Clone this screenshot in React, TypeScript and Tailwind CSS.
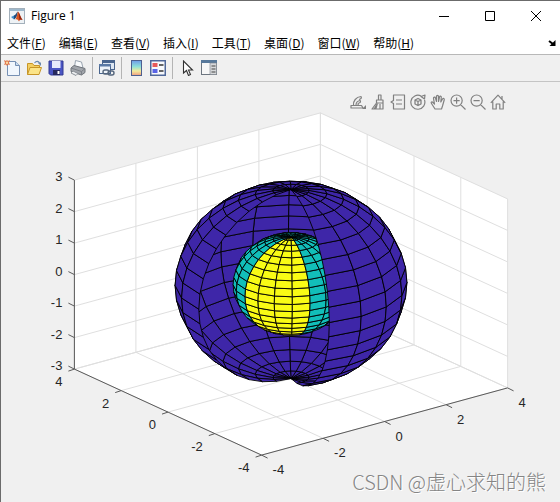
import React from 'react';
import { clsx } from 'clsx';

const menus = [
  { name: '文件', key: 'F' },
  { name: '编辑', key: 'E' },
  { name: '查看', key: 'V' },
  { name: '插入', key: 'I' },
  { name: '工具', key: 'T' },
  { name: '桌面', key: 'D' },
  { name: '窗口', key: 'W' },
  { name: '帮助', key: 'H' },
];

// Axes: x and y run from -4 to 4, z from -3 to 3
const OX = 291;
const OY = 202;
const AZIMUTHS = 20;
const LATITUDES = 20;

type Vec3 = [number, number, number];

function project([x, y, z]: Vec3): [number, number] {
  return [OX + 30.75 * x - 23.4 * y, OY - 8.4 * x - 10.75 * y - 31.5 * z];
}

function spherePoint(r: number, i: number, j: number): Vec3 {
  const az = -Math.PI + (i * 2 * Math.PI) / AZIMUTHS;
  const lat = -Math.PI / 2 + (j * Math.PI) / LATITUDES;
  return [r * Math.cos(lat) * Math.cos(az), r * Math.cos(lat) * Math.sin(az), r * Math.sin(lat)];
}

// Positive when the face normal points to the camera
function facing([x, y, z]: Vec3) {
  const az = (-127.3 * Math.PI) / 180;
  return 31.5 * (x * Math.cos(az) + y * Math.sin(az)) + 13.6 * z;
}

const toPoints = (pts: Vec3[]) =>
  pts.map((p) => project(p).map((n) => n.toFixed(1)).join(',')).join(' ');

type Face = { points: string; cut: boolean; front: boolean };

function buildSphere(r: number): Face[] {
  const faces: Face[] = [];
  for (let j = 0; j < LATITUDES; j++) {
    for (let i = 0; i < AZIMUTHS; i++) {
      faces.push({
        points: toPoints([
          spherePoint(r, i, j),
          spherePoint(r, i + 1, j),
          spherePoint(r, i + 1, j + 1),
          spherePoint(r, i, j + 1),
        ]),
        cut: i < 4,
        front: facing(spherePoint(r, i + 0.5, j + 0.5)) > 0,
      });
    }
  }
  return faces;
}

const shell = buildSphere(3).filter((f) => !f.cut);
const core = buildSphere(1.5).filter((f) => f.front);

const xyTicks = [-4, -2, 0, 2, 4];
const zTicks = [-3, -2, -1, 0, 1, 2, 3];

function Faces({ faces, fill }: { faces: Face[]; fill?: string }) {
  return (
    <g stroke="#000" strokeWidth="0.9" strokeLinejoin="round">
      {faces.map((f, i) => (
        <polygon key={i} points={f.points} fill={fill ?? (f.cut ? '#f9fb15' : '#12beb9')} />
      ))}
    </g>
  );
}

function Plot() {
  return (
    <svg viewBox="0 0 560 420" className="block w-full" role="img" aria-label="Figure 1">
      <polygon
        fill="#fff"
        points={toPoints([
          [-4, 4, -3],
          [-4, 4, 3],
          [4, 4, 3],
          [4, -4, 3],
          [4, -4, -3],
          [-4, -4, -3],
        ])}
      />

      {/* Grid */}
      <g fill="none" stroke="#dfdfdf" strokeWidth="1">
        {xyTicks.map((t) => (
          <React.Fragment key={t}>
            <polyline points={toPoints([[t, -4, -3], [t, 4, -3], [t, 4, 3]])} />
            <polyline points={toPoints([[-4, t, -3], [4, t, -3], [4, t, 3]])} />
          </React.Fragment>
        ))}
        {zTicks.map((t) => (
          <polyline key={t} points={toPoints([[-4, 4, t], [4, 4, t], [4, -4, t]])} />
        ))}
      </g>

      {/* Axis lines */}
      <g fill="none" stroke="#5a5a5a" strokeWidth="1">
        <polyline points={toPoints([[-4, 4, 3], [-4, 4, -3], [-4, -4, -3], [4, -4, -3]])} />
        {xyTicks.map((t) => {
          const [ax, ay] = project([t, -4, -3]);
          const [bx, by] = project([-4, t, -3]);
          return <path key={t} d={`M${ax} ${ay}l6 3M${bx} ${by}l-6 2`} />;
        })}
        {zTicks.map((t) => {
          const [x, y] = project([-4, 4, t]);
          return <path key={t} d={`M${x} ${y}l-6 -3`} />;
        })}
      </g>

      <g className="font-['Liberation_Sans',Arial,sans-serif] text-[13px]" fill="#262626">
        {xyTicks.map((t) => {
          const [ax, ay] = project([t, -4, -3]);
          const [bx, by] = project([-4, t, -3]);
          return (
            <React.Fragment key={t}>
              <text x={ax + 11} y={ay + 19}>{t}</text>
              <text x={bx - 12} y={by + 17} textAnchor="end">{t}</text>
            </React.Fragment>
          );
        })}
        {zTicks.map((t) => {
          const [x, y] = project([-4, 4, t]);
          return <text key={t} x={x - 12} y={y + 1} textAnchor="end">{t}</text>;
        })}
      </g>

      {/* Far side of the shell, the core, then the near side */}
      <Faces faces={shell.filter((f) => !f.front)} fill="#3e26a8" />
      <Faces faces={core} />
      <Faces faces={shell.filter((f) => f.front)} fill="#3e26a8" />
    </svg>
  );
}

const MatlabIcon = () => (
  <svg viewBox="0 0 16 16" className="size-4">
    <rect x=".5" y=".5" width="15" height="15" fill="#eef2f5" stroke="#a3b0bb" />
    <path d="M1 1h14v2H1z" fill="#9db8cc" />
    <path d="M2 9l3-1.500 2 2-2 2z" fill="#3c8cc8" />
    <path d="M5 7.500c2-.5 2.500-3.500 4-4L7.500 9 5 11.500z" fill="#234a78" />
    <path d="M9 3.500c1.500 1 2.500 6 5 8.500-2-1-3-.5-4 1.500-1-2-2-2.500-4-2 2-1 2-6 3-8z" fill="#d9541e" />
    <path d="M9.500 4c1.500 2 2 6 4 8-2-1-2.500-.5-3 0z" fill="#8e2415" />
  </svg>
);

const toolIcons: Record<string, React.ReactNode> = {
  new: (
    <>
      <path d="M3.500 1.500h8l4 4v10h-12z" fill="#f0f6fd" stroke="#7690b4" />
      <path d="M11.500 1.500v4h4" fill="#c8dcf0" stroke="#7690b4" />
      <path d="M0 0l2 1 1-1 1 1 2-1-1 2.500L6 5 4 4.500 3 6 2 4.500 0 5l1-2z" fill="#e0764a" />
      <circle cx="3" cy="2.800" r="1.200" fill="#fbd9a0" />
    </>
  ),
  open: (
    <>
      <path d="M1.500 14.500v-11h5l1.500 2h5.500v3" fill="#f3cf62" stroke="#c79527" />
      <path d="M1.500 14.500l2.500-7h11.500l-2.500 7z" fill="#fbe488" stroke="#c79527" />
      <path d="M8.500 3c2-2.500 4-2 5 0" fill="none" stroke="#6a89ae" strokeWidth="1.200" />
      <path d="M11.500 2.500H15V6z" fill="#6a89ae" />
    </>
  ),
  save: (
    <>
      <path d="M1 1h14v14H2.500L1 13.500z" fill="#4a55c4" stroke="#333b91" />
      <path d="M4 1h8.500v7H4z" fill="#e6eafc" />
      <path d="M5 10h7v5H5z" fill="#25285c" />
      <path d="M9.500 11h2v3h-2z" fill="#fff" />
    </>
  ),
  print: (
    <>
      <path d="M4.500 7l1-6.500 6 1.500 1.500 6z" fill="#f8fafc" stroke="#98a3af" />
      <path d="M1 8l3-2.500 11 3v4L11.500 15 1 11.500z" fill="#a2a6ac" stroke="#6f747b" />
      <path d="M1 8l10.500 3.500L15 8.500M11.500 11.500V15" fill="none" stroke="#7c8188" />
      <path d="M3 11l5 2.500-2 2-5-2.500z" fill="#eceef0" stroke="#8b9198" />
    </>
  ),
  link: (
    <>
      <rect x="3.500" y=".5" width="12" height="9" fill="#dce6f2" stroke="#49658e" />
      <path d="M3 0h13v3H3z" fill="#49658e" />
      <rect x=".5" y="4.500" width="11" height="9" fill="#edf3f9" stroke="#49658e" />
      <path d="M0 4h12v2.500H0z" fill="#5b7aa6" />
      <g fill="none" stroke="#56677d" strokeWidth="1.400">
        <rect x="4" y="10" width="6" height="4" rx="2" />
        <rect x="9" y="11" width="6" height="4" rx="2" />
      </g>
    </>
  ),
  colorbar: (
    <>
      <defs>
        <linearGradient id="bar" x1="0" y1="0" x2="0" y2="1">
          <stop offset="0" stopColor="#6f9be8" />
          <stop offset=".4" stopColor="#8ddfd9" />
          <stop offset=".7" stopColor="#f3ec9c" />
          <stop offset="1" stopColor="#ee9b80" />
        </linearGradient>
      </defs>
      <rect x="3.500" y=".5" width="10" height="15" fill="url(#bar)" stroke="#4d608f" />
    </>
  ),
  legend: (
    <>
      <rect x=".75" y=".75" width="14.500" height="14.500" fill="#f7f9fc" stroke="#50689a" strokeWidth="1.500" />
      <path d="M2.500 3h5v4h-5z" fill="#e85a5a" />
      <path d="M2.500 9h5v4h-5z" fill="#5a64e6" />
      <path d="M9 5h4.500M9 11h4.500" stroke="#333" strokeWidth="1.400" />
    </>
  ),
  pointer: (
    <path d="M4.500 1v12l3-2.500 2 5 2-1-2-4.500h4z" fill="#fff" stroke="#333" strokeWidth="1.100" />
  ),
  inspector: (
    <>
      <rect x=".5" y=".5" width="15" height="14" fill="#f7f7f7" stroke="#6d7680" />
      <path d="M0 0h16v3H0z" fill="#58799b" />
      <path d="M9 3h6.500v11.500H9z" fill="#d6d8da" stroke="#7b8289" strokeWidth=".6" />
      <path d="M10.500 6h4M10.500 9h4M10.500 12h4" stroke="#444" strokeWidth="1.200" />
    </>
  ),
};

const toolGroups = [
  [
    { id: 'new', label: '新建图窗' },
    { id: 'open', label: '打开文件' },
    { id: 'save', label: '保存图窗' },
    { id: 'print', label: '打印图窗' },
  ],
  [{ id: 'link', label: '链接绘图' }],
  [
    { id: 'colorbar', label: '插入颜色栏' },
    { id: 'legend', label: '插入图例' },
  ],
  [
    { id: 'pointer', label: '编辑绘图' },
    { id: 'inspector', label: '打开属性检查器' },
  ],
];

const axesTools = [
  {
    label: '导出',
    icon: (
      <>
        <path d="M1 11.500h10.500l1.500 2.500H1zM3.500 11.500C3 7 6 3 11 2.500c1 1.500 0 2.500-2 3M6 11c0-2 1.500-4 4-4.500 1 1 .5 2-1 2.500s-1 1.500-.5 2.500" />
        <path d="M16 11v4h-4z" fill="currentColor" stroke="none" />
      </>
    ),
  },
  {
    label: '刷亮',
    icon: (
      <>
        <path d="M8.500 1H11v5H8.500zM6.500 6H13v3H6.500zM6.500 9L2 15h11V9z" />
        <path d="M6.500 9.500L3.500 15h3l1.500-5.500z" fill="currentColor" stroke="none" />
        <path d="M10 10v5" />
      </>
    ),
  },
  { label: '数据提示', icon: <path d="M3.500 1h11v14h-11v-5.500L1 8l2.500-1.500zM6 6h6M6 10h6" /> },
  {
    label: '三维旋转',
    icon: (
      <>
        <path d="M11 2A7 7 0 1 0 14.500 6M11 2.500L15 1l-.5 4z" />
        <path d="M8 4.500l3 1.500v4l-3 1.500L5 10V6zM5 6l3 1.500L11 6M8 7.500v4" strokeWidth="1.300" />
      </>
    ),
  },
  {
    label: '平移',
    icon: (
      <path d="M5 15L1.500 9.500C.5 8 2 7.500 3 8.500L4.500 10 3.500 4.500c-.2-1.500 1.500-2 2-.5L6.500 7.500V2.500c0-1.500 2-1.500 2 0v5l1-4.500c.3-1.500 2-1 1.800.3L10.800 8l1.700-3c.8-1.200 2.200-.5 1.700 1L12.500 12l-1 3z" />
    ),
  },
  {
    label: '放大',
    icon: <path d="M12.200 6.600A5.600 5.600 0 1 1 1 6.600a5.600 5.600 0 0 1 11.200 0zM10.600 10.600L15.500 15.500M3.500 6.600h6.200M6.600 3.500v6.200" />,
  },
  {
    label: '缩小',
    icon: <path d="M12.200 6.600A5.600 5.600 0 1 1 1 6.600a5.600 5.600 0 0 1 11.200 0zM10.600 10.600L15.500 15.500M3.500 6.600h6.200" />,
  },
  { label: '还原视图', icon: <path d="M.8 8.800L8 1.200l7.200 7.600M2.800 7.500V15h3.400v-5h3.600v5h3.400V7.500M12 5V2" /> },
];

function TitleBar() {
  return (
    <header className="flex h-[30px] items-center bg-white pr-px pl-2">
      <MatlabIcon />
      <h1 className="ml-[6px] flex-1 font-['Open_Sans','Noto_Sans',sans-serif] text-[12px]">Figure 1</h1>
      {[
        { label: '最小化', d: 'M0 5.500h10' },
        { label: '最大化', d: 'M.5.500h9v9h-9z' },
        { label: '关闭', d: 'M0 0l10 10M10 0L0 10' },
      ].map((b) => (
        <button key={b.label} aria-label={b.label} className="flex h-full w-[46px] items-center justify-center">
          <svg viewBox="0 0 10 10" className="size-[10px] overflow-visible" fill="none" stroke="#000">
            <path d={b.d} />
          </svg>
        </button>
      ))}
    </header>
  );
}

function MenuBar() {
  return (
    <nav className="flex h-[23px] items-center gap-[13px] bg-white pr-1 pl-[6px] text-[12px]">
      {menus.map((m) => (
        <button key={m.key} className="whitespace-nowrap">
          {m.name}(<span className="underline underline-offset-1">{m.key}</span>)
        </button>
      ))}
      <button aria-label="停靠" className="ml-auto">
        <svg viewBox="0 0 8 8" className="size-2">
          <path d="M1 2l4 3" stroke="#000" strokeWidth="2" />
          <path d="M7.500 1v6h-6z" />
        </svg>
      </button>
    </nav>
  );
}

function Toolbar() {
  return (
    <div className="flex h-7 items-center gap-[6px] border-t border-b border-t-[#b8b8b8] border-b-[#c4c4c4] bg-[#f0f0f0] pl-[3px]">
      {toolGroups.map((group, gi) => (
        <div
          key={gi}
          className={clsx('flex items-center gap-[6px]', gi > 0 && 'h-[22px] border-l border-[#b4b4b4] pl-[6px]')}
        >
          {group.map((tool) => (
            <button key={tool.id} aria-label={tool.label}>
              <svg viewBox="0 0 16 16" className="block size-4">
                {toolIcons[tool.id]}
              </svg>
            </button>
          ))}
        </div>
      ))}
    </div>
  );
}

export default function App() {
  return (
    <div className="min-h-screen border-t border-l border-[#6b6b6b] bg-[#f0f0f0] font-['Noto_Sans_CJK_SC',sans-serif] text-black">
      <TitleBar />
      <MenuBar />
      <Toolbar />
      <main className="relative -ml-px">
        <Plot />
        <div className="absolute top-3 right-[54px] flex gap-1 text-[#808080]">
          {axesTools.map((t) => (
            <button key={t.label} aria-label={t.label}>
              <svg
                viewBox="0 0 16 16"
                className="block size-4"
                fill="none"
                stroke="currentColor"
                strokeWidth="1.200"
                strokeLinejoin="round"
              >
                {t.icon}
              </svg>
            </button>
          ))}
        </div>
        <p className="absolute right-[14px] bottom-1 text-[20px] leading-8 font-light text-[#858585] [text-shadow:1px_1px_0_#fff]">
          CSDN @虚心求知的熊
        </p>
      </main>
    </div>
  );
}
